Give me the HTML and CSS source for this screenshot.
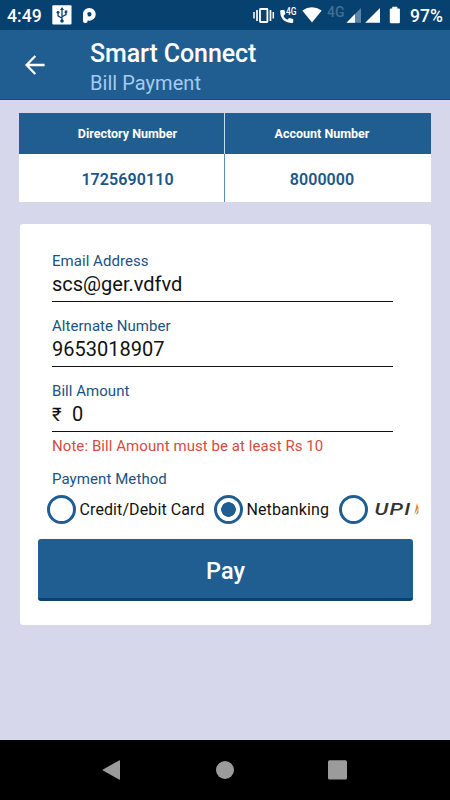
FILE: index.html
```html
<!DOCTYPE html>
<html lang="en">
<head>
<meta charset="utf-8">
<title>Smart Connect</title>
<link rel="stylesheet" href="styles.css">
</head>
<body>
<div class="screen">
  <div class="status">
    <span class="clock">4:49</span>
    <svg class="notif" width="50" height="30" viewBox="0 0 50 30">
      <rect x="4.3" y="5.3" width="19.2" height="19.2" rx="1" fill="#fff"/>
      <g stroke="#0b4473" stroke-width="1.3" fill="none"><path d="M14 9v11M14 18.2L10 15.8V12.5M14 16.8l4-2.2v-2.8"/></g>
      <g fill="#0b4473"><path d="M14 7l2 3h-4z"/><circle cx="14" cy="21" r="1.8"/><circle cx="10" cy="12.3" r="1.4"/><rect x="16.7" y="10.5" width="2.6" height="2.6"/></g>
      <circle cx="41.300" cy="14.300" r="4.300" fill="none" stroke="#fff" stroke-width="4.200"/>
      <rect x="35" y="13" width="4.600" height="10" rx="2" fill="#fff"/>
    </svg>
    <svg class="system" width="155" height="30" viewBox="250 0 155 30">
      <g fill="none" stroke="#fff"><rect x="260" y="9" width="7.4" height="13" rx=".5" stroke-width="1.8"/><path d="M257 10v11M270.5 10v11" stroke-width="1.7"/><path d="M254 12v6.5M273.3 12v6.5" stroke-width="1.5"/></g>
      <path d="M281.3 10h3.1l1 4-2 2q1.4 2.5 3.8 3.7l2-1.8 4 1v3.2q0 1-1.1 1Q280.200 22.300 280.200 11q0-1 1.100-1z" fill="#fff"/>
      <text x="286" y="15" class="net-small" textLength="10.500" lengthAdjust="spacingAndGlyphs">4G</text>
      <path d="M302.300 10.400Q311.800 4 321.700 10.400L312 22.500z" fill="#fff"/>
      <text x="327" y="17" class="net" textLength="17.500" lengthAdjust="spacingAndGlyphs">4G</text>
      <path d="M361 8v14.800H346.500z" fill="#5b84a8"/><path d="M355 14.100v8.700h-8.500z" fill="#fff"/>
      <path d="M380 8v14.800h-14.800z" fill="#fff"/>
      <path d="M392.300 6.800h5v1.800h1.600q1 0 1 1v12.600q0 1-1 1h-8.100q-1 0-1-1V9.600q0-1 1-1h1.500z" fill="#fff"/>
    </svg>
    <span class="battery">97%</span>
  </div>
  <header class="appbar">
    <svg class="back" width="20" height="20" viewBox="0 0 20 20"><path d="M19.600 10H2M10.300 1L1.500 10l8.800 9" fill="none" stroke="#fff" stroke-width="2.300"/></svg>
    <div class="titles"><h1>Smart Connect</h1><p>Bill Payment</p></div>
  </header>
  <main>
    <div class="account">
      <div class="th">Directory Number</div><div class="th">Account Number</div>
      <div class="td">1725690110</div><div class="td">8000000</div>
    </div>
    <section class="card">
      <div class="field"><label>Email Address</label><div class="value email">scs@ger.vdfvd</div></div>
      <div class="field"><label>Alternate Number</label><div class="value phone">9653018907</div></div>
      <div class="field"><label>Bill Amount</label><div class="value"><span class="rupee">₹</span>0</div></div>
      <p class="note">Note: Bill Amount must be at least Rs 10</p>
      <p class="method">Payment Method</p>
      <div class="options">
        <span class="radio"></span><span class="opt credit">Credit/Debit Card</span>
        <span class="radio on"></span><span class="opt netb">Netbanking</span>
        <span class="radio"></span>
        <svg class="upi" width="46" height="20" viewBox="0 0 46 20"><text x="-.5" y="16" class="upi-text" textLength="37" lengthAdjust="spacingAndGlyphs">UPI</text><path d="M42 4l1.300 5-4 6.500z" fill="#e78335"/><path d="M43.400 5v9l-2.600 2 2.200-6z" fill="#b39a79"/></svg>
      </div>
      <div class="pay">Pay</div>
    </section>
  </main>
  <nav class="nav">
    <svg width="450" height="60" viewBox="0 0 450 60" fill="#9b9b9b"><path d="M119 20.500q1-.5 1 .5v18q0 1-1 .5l-16-9q-.8-.5 0-1z"/><circle cx="225" cy="30" r="9"/><rect x="328" y="20.300" width="19" height="19.200" rx="1.500"/></svg>
  </nav>
</div>
</body>
</html>
```

FILE: styles.css
```css
* { box-sizing: border-box; }
body { margin: 0; font-family: Roboto, "Liberation Sans", sans-serif; }
h1, p { margin: 0; }
svg { display: block; flex: none; }
.screen { width: 450px; height: 800px; display: flex; flex-direction: column; background: #d6d7eb; overflow: hidden; white-space: nowrap; }
.status { height: 30px; display: flex; background: #07416f; color: #fff; font-size: 18px; font-weight: 500; line-height: 32px; }
.clock { width: 48px; padding-left: 7px; font-size: 17.6px; }
.system { margin-left: 152px; }
.battery { padding-left: 5px; font-size: 17.500px; }
.net-small { font-size: 10px; font-weight: 500; fill: #fff; }
.net { font-size: 14.5px; font-weight: 500; fill: #426f97; }
.appbar { height: 70px; display: flex; background: #205e91; border-bottom: 1px solid #124c7c; }
.back { margin: 25px 0 0 25px; }
.titles { margin-left: 45px; }
.titles h1 { color: #fff; font-size: 25px; font-weight: 500; line-height: 30px; margin-top: 9px; letter-spacing: -0.1px; }
.titles p { color: #a6caf0; font-size: 20px; line-height: 24px; margin-top: 2px; letter-spacing: 0.05px; }
main { flex: 1; padding: 13px 19px 0; }
.account { display: grid; grid-template-columns: 206px 206px; grid-template-rows: 41px 48px; }
.account div { display: flex; align-items: center; justify-content: center; padding-left: 11px; }
.account div:nth-child(even) { margin-left: -1px; border-left: 1.5px solid #5c8fb8; padding-left: 0; padding-right: 12px; }
.account .th { background: #205e91; color: #fff; font-size: 12.5px; font-weight: 700; }
.account .th:nth-child(even) { border-left-color: #c4dcef; }
.account .td { background: #fff; color: #1b5689; font-size: 16px; font-weight: 600; letter-spacing: 0.08px; padding-top: 2px; }
.card { margin: 22px 1px 0; width: 411px; height: 401px; border-radius: 3px; background: #fff; padding: 27px 18px 0; }
.field { margin: 0 20px 0 14px; height: 65px; }
label, .note, .method { display: block; font-size: 15px; line-height: 20px; color: #1b5281; letter-spacing: 0.04px; }
.value { height: 31px; border-bottom: 1.500px solid #111; font-size: 20px; line-height: 27px; color: #111; }
.rupee { display: inline-block; width: 20px; font-size: 18.500px; }
.note { margin: -10px 0 0 14px; color: #d44c3f; letter-spacing: 0.07px; }
.method { margin: 13px 0 0 14px; letter-spacing: 0.08px; }
.options { display: flex; align-items: center; height: 30px; margin: 5px 0 0 9px; font-size: 16px; color: #111; }
.radio { width: 29px; height: 29px; flex: none; border: 3px solid #205e91; border-radius: 50%; }
.radio.on { background: radial-gradient(circle, #205e91 7px, #fff 7.600px); }
.opt { padding-left: 3.500px; flex: none; letter-spacing: 0.1px; }
.credit { width: 138px; }
.netb { width: 96px; }
.upi { margin-left: 7px; }
.upi-text { font-size: 17px; font-style: italic; font-weight: 500; letter-spacing: 1px; fill: #333; }
.pay { width: 375px; height: 62px; margin-top: 15px; border-radius: 3px; border-bottom: 3px solid #0b426f; background: #205e91; color: #fff; font-size: 23.500px; font-weight: 500; line-height: 65px; text-align: center; }
.nav { height: 60px; background: #000; }
```
